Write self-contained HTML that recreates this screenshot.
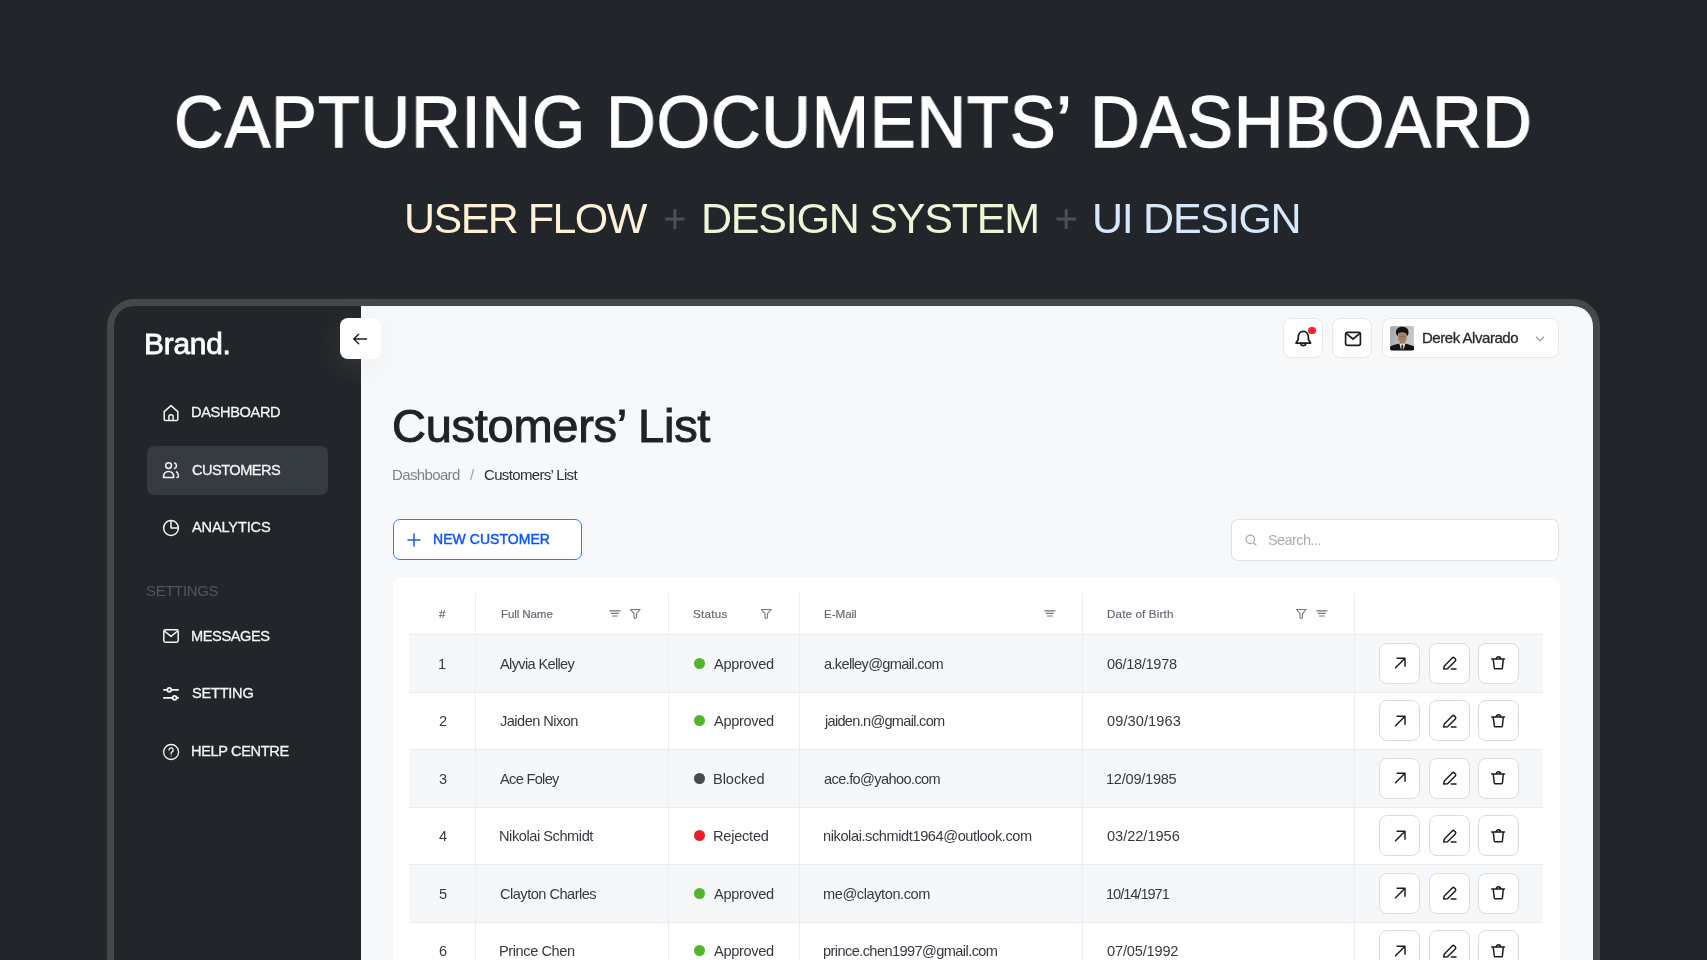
<!DOCTYPE html>
<html><head><meta charset="utf-8"><style>
*{margin:0;padding:0;box-sizing:border-box}
html,body{width:1707px;height:960px;overflow:hidden;background:#222529}
body{position:relative;font-family:"Liberation Sans",sans-serif}
.t{position:absolute;white-space:nowrap;will-change:transform}
.ic{position:absolute;overflow:visible}
.dot{position:absolute;border-radius:50%}
#frame{position:absolute;left:106.6px;top:298.5px;width:1493.4px;height:720px;border-radius:27px;background:#44484b}
#inner{position:absolute;left:114px;top:306px;width:1479px;height:700px;border-radius:20px;background:#222529;overflow:hidden}
#main{position:absolute;left:360.6px;top:306px;width:1232.4px;height:700px;background:#f7f8fa;border-top-right-radius:20px}
.sbtn{position:absolute;background:#fff;border:1px solid #e6e8eb;border-radius:8px}
#active{position:absolute;left:147px;top:445.7px;width:180.5px;height:49.2px;border-radius:7px;background:#363a41}
#collapse{position:absolute;left:340px;top:318px;width:41px;height:41px;border-radius:8px;background:#fff;box-shadow:0 8px 28px rgba(185,190,198,0.13)}
#newbtn{position:absolute;left:393px;top:519.2px;width:189px;height:41.2px;border:1.4px solid #3a78f7;border-radius:7px;background:#fff}
#search{position:absolute;left:1231.4px;top:519.3px;width:328px;height:41.3px;border:1.2px solid #dde1e6;border-radius:7px;background:#fff}
#card{position:absolute;left:393px;top:577px;width:1166.8px;height:420px;border-radius:8px;background:#fff}
.row{position:absolute;left:409px;width:1134px;border-top:1px solid #e9ecef}
.vline{position:absolute;top:593px;width:1px;height:380px;background:#eceef1}
.abtn{position:absolute;width:41px;height:41px;border:1.2px solid #d9dde2;border-radius:8px;background:#fff}
</style></head><body>
<svg class="ic" style="left:0;top:0;width:1707px;height:300px" viewBox="0 0 1707 300" stroke="#4b5158" stroke-width="3" fill="none">
<path d="M665.3 218.9 H684.5 M674.9 209.2 V228.9 M1056.5 218.9 H1075.9 M1066.2 209.2 V228.9"/>
</svg>
<div id="frame"></div>
<div id="inner"></div>
<div id="main"></div>
<div id="active"></div>
<div id="collapse"></div>
<div class="sbtn" style="left:1283.1px;top:318.3px;width:40.1px;height:40.1px"></div>
<div class="sbtn" style="left:1332.3px;top:318.3px;width:40.1px;height:40.1px"></div>
<div class="sbtn" style="left:1382.3px;top:318.3px;width:176.9px;height:40.1px"></div>
<svg style="position:absolute;left:1389.5px;top:326.3px;width:24.5px;height:24.6px" viewBox="0 0 25 25">
<defs><linearGradient id="ag" x1="0" y1="0" x2="1" y2="0.3"><stop offset="0" stop-color="#a4a9ab"/><stop offset="1" stop-color="#c6cacb"/></linearGradient>
<clipPath id="ac"><rect width="25" height="25" rx="2.6"/></clipPath></defs>
<g clip-path="url(#ac)">
<rect width="25" height="25" fill="url(#ag)"/>
<path d="M10.2 15 L10.2 19.5 L14.8 19.5 L14.8 15 Z" fill="#8a6550"/>
<ellipse cx="12.6" cy="11.6" rx="4.3" ry="5.9" fill="#a77e62"/>
<path d="M8.8 10.2 H16.4 V11.4 H8.8 Z" fill="#6a5042" opacity="0.35"/>
<path d="M6.2 7.6 C5.6 3 8.6 0.7 12.5 0.8 C16.6 0.9 19.4 3 18.8 7.6 C18.4 9 17.8 9.8 17.2 10.4 C17.2 8.4 16.4 6.9 14.2 6.6 C12.4 6.3 10.4 6.4 9 7.1 C8.3 7.6 8 8.8 8.1 10.4 C7.2 9.6 6.5 8.7 6.2 7.6 Z" fill="#141212"/>
<path d="M0 25.5 V21.2 C1.8 19.8 5.6 18.8 9.4 17.8 L12.6 25.5 Z" fill="#111213"/>
<path d="M25 25.5 V21.2 C23.2 19.8 19.4 18.8 15.8 17.8 L12.6 25.5 Z" fill="#111213"/>
<path d="M9.6 17.8 L15.6 17.8 L13.6 25.5 H11.6 Z" fill="#e4e6e6"/>
<path d="M11.9 19.2 H13.3 L13.9 25.5 H11.3 Z" fill="#1d1f21"/>
</g></svg>
<div id="newbtn"></div>
<div id="search"></div>
<div id="card"></div>
<div class="row" style="top:634.3px;height:57.5px;background:#f6f7f9"></div><div class="dot" style="left:693.7px;top:657.8px;width:11.2px;height:11.2px;background:#52b62c"></div><div class="abtn" style="left:1379.2px;top:642.5999999999999px"></div><div class="abtn" style="left:1428.5px;top:642.5999999999999px"></div><div class="abtn" style="left:1478.2px;top:642.5999999999999px"></div><svg class="ic" style="left:1392.5px;top:655.3px;width:16px;height:16px" viewBox="0 0 16 16" fill="none" stroke="#1a1d21" stroke-width="1.45" stroke-linecap="round" stroke-linejoin="round" ><path d="M2.5 12.7 L12 3.2 M4.1 3.2 H12 V11.2"/></svg><svg class="ic" style="left:1441.5px;top:655.3px;width:16px;height:16px" viewBox="0 0 16 16" fill="none" stroke="#1a1d21" stroke-width="1.45" stroke-linecap="round" stroke-linejoin="round" ><path d="M1.7 14 L2.3 10.9 L10.3 2.9 a1.5 1.5 0 0 1 2.1 0 L13.3 3.8 a1.5 1.5 0 0 1 0 2.1 L5.3 13.9 Z"/><path d="M9.3 14 H14"/></svg><svg class="ic" style="left:1490.3px;top:655.3px;width:16px;height:16px" viewBox="0 0 16 16" fill="none" stroke="#1a1d21" stroke-width="1.5" stroke-linecap="round" stroke-linejoin="round" ><path d="M1.7 4.1 H14.5 M6.1 4.1 a2.3 2.3 0 0 1 4.6 0 M3.2 4.1 L4.3 12.9 a1.1 1.1 0 0 0 1.1 0.9 H11.3 a1.1 1.1 0 0 0 1.1 -0.9 L13.3 4.1"/></svg><div class="row" style="top:691.8px;height:57.5px;background:#ffffff"></div><div class="dot" style="left:693.7px;top:715.3px;width:11.2px;height:11.2px;background:#52b62c"></div><div class="abtn" style="left:1379.2px;top:700.0999999999999px"></div><div class="abtn" style="left:1428.5px;top:700.0999999999999px"></div><div class="abtn" style="left:1478.2px;top:700.0999999999999px"></div><svg class="ic" style="left:1392.5px;top:712.8px;width:16px;height:16px" viewBox="0 0 16 16" fill="none" stroke="#1a1d21" stroke-width="1.45" stroke-linecap="round" stroke-linejoin="round" ><path d="M2.5 12.7 L12 3.2 M4.1 3.2 H12 V11.2"/></svg><svg class="ic" style="left:1441.5px;top:712.8px;width:16px;height:16px" viewBox="0 0 16 16" fill="none" stroke="#1a1d21" stroke-width="1.45" stroke-linecap="round" stroke-linejoin="round" ><path d="M1.7 14 L2.3 10.9 L10.3 2.9 a1.5 1.5 0 0 1 2.1 0 L13.3 3.8 a1.5 1.5 0 0 1 0 2.1 L5.3 13.9 Z"/><path d="M9.3 14 H14"/></svg><svg class="ic" style="left:1490.3px;top:712.8px;width:16px;height:16px" viewBox="0 0 16 16" fill="none" stroke="#1a1d21" stroke-width="1.5" stroke-linecap="round" stroke-linejoin="round" ><path d="M1.7 4.1 H14.5 M6.1 4.1 a2.3 2.3 0 0 1 4.6 0 M3.2 4.1 L4.3 12.9 a1.1 1.1 0 0 0 1.1 0.9 H11.3 a1.1 1.1 0 0 0 1.1 -0.9 L13.3 4.1"/></svg><div class="row" style="top:749.3px;height:57.5px;background:#f6f7f9"></div><div class="dot" style="left:693.7px;top:772.8px;width:11.2px;height:11.2px;background:#464b52"></div><div class="abtn" style="left:1379.2px;top:757.5999999999999px"></div><div class="abtn" style="left:1428.5px;top:757.5999999999999px"></div><div class="abtn" style="left:1478.2px;top:757.5999999999999px"></div><svg class="ic" style="left:1392.5px;top:770.3px;width:16px;height:16px" viewBox="0 0 16 16" fill="none" stroke="#1a1d21" stroke-width="1.45" stroke-linecap="round" stroke-linejoin="round" ><path d="M2.5 12.7 L12 3.2 M4.1 3.2 H12 V11.2"/></svg><svg class="ic" style="left:1441.5px;top:770.3px;width:16px;height:16px" viewBox="0 0 16 16" fill="none" stroke="#1a1d21" stroke-width="1.45" stroke-linecap="round" stroke-linejoin="round" ><path d="M1.7 14 L2.3 10.9 L10.3 2.9 a1.5 1.5 0 0 1 2.1 0 L13.3 3.8 a1.5 1.5 0 0 1 0 2.1 L5.3 13.9 Z"/><path d="M9.3 14 H14"/></svg><svg class="ic" style="left:1490.3px;top:770.3px;width:16px;height:16px" viewBox="0 0 16 16" fill="none" stroke="#1a1d21" stroke-width="1.5" stroke-linecap="round" stroke-linejoin="round" ><path d="M1.7 4.1 H14.5 M6.1 4.1 a2.3 2.3 0 0 1 4.6 0 M3.2 4.1 L4.3 12.9 a1.1 1.1 0 0 0 1.1 0.9 H11.3 a1.1 1.1 0 0 0 1.1 -0.9 L13.3 4.1"/></svg><div class="row" style="top:806.8px;height:57.5px;background:#ffffff"></div><div class="dot" style="left:693.7px;top:830.3px;width:11.2px;height:11.2px;background:#f01d25"></div><div class="abtn" style="left:1379.2px;top:815.0999999999999px"></div><div class="abtn" style="left:1428.5px;top:815.0999999999999px"></div><div class="abtn" style="left:1478.2px;top:815.0999999999999px"></div><svg class="ic" style="left:1392.5px;top:827.8px;width:16px;height:16px" viewBox="0 0 16 16" fill="none" stroke="#1a1d21" stroke-width="1.45" stroke-linecap="round" stroke-linejoin="round" ><path d="M2.5 12.7 L12 3.2 M4.1 3.2 H12 V11.2"/></svg><svg class="ic" style="left:1441.5px;top:827.8px;width:16px;height:16px" viewBox="0 0 16 16" fill="none" stroke="#1a1d21" stroke-width="1.45" stroke-linecap="round" stroke-linejoin="round" ><path d="M1.7 14 L2.3 10.9 L10.3 2.9 a1.5 1.5 0 0 1 2.1 0 L13.3 3.8 a1.5 1.5 0 0 1 0 2.1 L5.3 13.9 Z"/><path d="M9.3 14 H14"/></svg><svg class="ic" style="left:1490.3px;top:827.8px;width:16px;height:16px" viewBox="0 0 16 16" fill="none" stroke="#1a1d21" stroke-width="1.5" stroke-linecap="round" stroke-linejoin="round" ><path d="M1.7 4.1 H14.5 M6.1 4.1 a2.3 2.3 0 0 1 4.6 0 M3.2 4.1 L4.3 12.9 a1.1 1.1 0 0 0 1.1 0.9 H11.3 a1.1 1.1 0 0 0 1.1 -0.9 L13.3 4.1"/></svg><div class="row" style="top:864.3px;height:57.5px;background:#f6f7f9"></div><div class="dot" style="left:693.7px;top:887.8px;width:11.2px;height:11.2px;background:#52b62c"></div><div class="abtn" style="left:1379.2px;top:872.5999999999999px"></div><div class="abtn" style="left:1428.5px;top:872.5999999999999px"></div><div class="abtn" style="left:1478.2px;top:872.5999999999999px"></div><svg class="ic" style="left:1392.5px;top:885.3px;width:16px;height:16px" viewBox="0 0 16 16" fill="none" stroke="#1a1d21" stroke-width="1.45" stroke-linecap="round" stroke-linejoin="round" ><path d="M2.5 12.7 L12 3.2 M4.1 3.2 H12 V11.2"/></svg><svg class="ic" style="left:1441.5px;top:885.3px;width:16px;height:16px" viewBox="0 0 16 16" fill="none" stroke="#1a1d21" stroke-width="1.45" stroke-linecap="round" stroke-linejoin="round" ><path d="M1.7 14 L2.3 10.9 L10.3 2.9 a1.5 1.5 0 0 1 2.1 0 L13.3 3.8 a1.5 1.5 0 0 1 0 2.1 L5.3 13.9 Z"/><path d="M9.3 14 H14"/></svg><svg class="ic" style="left:1490.3px;top:885.3px;width:16px;height:16px" viewBox="0 0 16 16" fill="none" stroke="#1a1d21" stroke-width="1.5" stroke-linecap="round" stroke-linejoin="round" ><path d="M1.7 4.1 H14.5 M6.1 4.1 a2.3 2.3 0 0 1 4.6 0 M3.2 4.1 L4.3 12.9 a1.1 1.1 0 0 0 1.1 0.9 H11.3 a1.1 1.1 0 0 0 1.1 -0.9 L13.3 4.1"/></svg><div class="row" style="top:921.8px;height:57.5px;background:#ffffff"></div><div class="dot" style="left:693.7px;top:945.3px;width:11.2px;height:11.2px;background:#52b62c"></div><div class="abtn" style="left:1379.2px;top:930.0999999999999px"></div><div class="abtn" style="left:1428.5px;top:930.0999999999999px"></div><div class="abtn" style="left:1478.2px;top:930.0999999999999px"></div><svg class="ic" style="left:1392.5px;top:942.8px;width:16px;height:16px" viewBox="0 0 16 16" fill="none" stroke="#1a1d21" stroke-width="1.45" stroke-linecap="round" stroke-linejoin="round" ><path d="M2.5 12.7 L12 3.2 M4.1 3.2 H12 V11.2"/></svg><svg class="ic" style="left:1441.5px;top:942.8px;width:16px;height:16px" viewBox="0 0 16 16" fill="none" stroke="#1a1d21" stroke-width="1.45" stroke-linecap="round" stroke-linejoin="round" ><path d="M1.7 14 L2.3 10.9 L10.3 2.9 a1.5 1.5 0 0 1 2.1 0 L13.3 3.8 a1.5 1.5 0 0 1 0 2.1 L5.3 13.9 Z"/><path d="M9.3 14 H14"/></svg><svg class="ic" style="left:1490.3px;top:942.8px;width:16px;height:16px" viewBox="0 0 16 16" fill="none" stroke="#1a1d21" stroke-width="1.5" stroke-linecap="round" stroke-linejoin="round" ><path d="M1.7 4.1 H14.5 M6.1 4.1 a2.3 2.3 0 0 1 4.6 0 M3.2 4.1 L4.3 12.9 a1.1 1.1 0 0 0 1.1 0.9 H11.3 a1.1 1.1 0 0 0 1.1 -0.9 L13.3 4.1"/></svg>
<div class="vline" style="left:475px"></div><div class="vline" style="left:668px"></div><div class="vline" style="left:799px"></div><div class="vline" style="left:1082px"></div><div class="vline" style="left:1354px"></div>
<div class="dot" style="left:1307.8px;top:326.5px;width:7.8px;height:7.8px;background:#ff1e26"></div>
<svg class="ic" style="left:161px;top:403px;width:20px;height:20px" viewBox="0 0 20 20" fill="none" stroke="#f3f4f5" stroke-width="1.5" stroke-linecap="round" stroke-linejoin="round" ><path d="M3.2 8.6 L10 2.6 L16.8 8.6 V16.2 a1.3 1.3 0 0 1 -1.3 1.3 H4.5 a1.3 1.3 0 0 1 -1.3 -1.3 Z"/><path d="M7.9 17.5 V13.9 a2.1 2.1 0 0 1 4.2 0 V17.5"/></svg><svg class="ic" style="left:161px;top:460px;width:20px;height:20px" viewBox="0 0 20 20" fill="none" stroke="#f3f4f5" stroke-width="1.5" stroke-linecap="round" stroke-linejoin="round" ><circle cx="7.6" cy="5.6" r="2.9"/><path d="M2.5 17.6 C2.5 13.6 4.6 11.6 7.6 11.6 C10.6 11.6 12.7 13.6 12.7 17.6 Z"/><path d="M13.6 3 a2.9 2.9 0 0 1 0 5.4"/><path d="M15.6 11.9 C16.8 12.8 17.4 14.4 17.4 16.2 C17.4 17.2 16.8 17.6 16 17.6"/></svg><svg class="ic" style="left:161px;top:517.6px;width:20px;height:20px" viewBox="0 0 20 20" fill="none" stroke="#f3f4f5" stroke-width="1.5" stroke-linecap="round" stroke-linejoin="round" ><circle cx="10" cy="10" r="7.4"/><path d="M10 2.6 V10 H17.4"/></svg><svg class="ic" style="left:161px;top:626.4px;width:20px;height:20px" viewBox="0 0 20 20" fill="none" stroke="#f3f4f5" stroke-width="1.5" stroke-linecap="round" stroke-linejoin="round" ><rect x="2.8" y="3.8" width="14.4" height="12.4" rx="1.6"/><path d="M3.4 5 L10 10.4 L16.6 5"/></svg><svg class="ic" style="left:161px;top:684px;width:20px;height:20px" viewBox="0 0 20 20" fill="none" stroke="#f3f4f5" stroke-width="1.7" stroke-linecap="round" stroke-linejoin="round" ><path d="M2.8 5.8 H6.3 M10.3 5.8 H17.2 M2.8 13.8 H11.6 M15.6 13.8 H17.2"/><circle cx="8.3" cy="5.8" r="2"/><circle cx="13.6" cy="13.8" r="2"/></svg><svg class="ic" style="left:161px;top:741.6px;width:20px;height:20px" viewBox="0 0 20 20" fill="none" stroke="#f3f4f5" stroke-width="1.3" stroke-linecap="round" stroke-linejoin="round" ><circle cx="10.1" cy="10" r="7.5"/><path d="M8 8 a2.1 2.1 0 1 1 3 1.9 c-0.6 0.3 -0.9 0.8 -0.9 1.5 v0.5"/><circle cx="10.1" cy="14.1" r="0.5" fill="#f3f4f5" stroke="none"/></svg><svg class="ic" style="left:350px;top:328.5px;width:20px;height:20px" viewBox="0 0 20 20" fill="none" stroke="#1a1d21" stroke-width="1.35" stroke-linecap="round" stroke-linejoin="round" ><path d="M16.6 10 H3.7 M8.7 5.2 L3.7 10 L8.7 14.8"/></svg><svg class="ic" style="left:1293px;top:329px;width:20px;height:20px" viewBox="0 0 20 20" fill="none" stroke="#1a1d21" stroke-width="1.75" stroke-linecap="round" stroke-linejoin="round" ><path d="M5.2 8.4 C5.2 4.8 7.4 2.3 10.3 2.3 C13.2 2.3 15.4 4.8 15.4 8.4 V10.6 L17.6 14 H3 L5.2 10.6 Z"/><path d="M7.9 14.3 a2.4 2.4 0 0 0 4.8 0"/></svg><svg class="ic" style="left:1342.7px;top:328.6px;width:20px;height:20px" viewBox="0 0 20 20" fill="none" stroke="#1a1d21" stroke-width="1.7" stroke-linecap="round" stroke-linejoin="round" ><rect x="2.6" y="3.4" width="14.8" height="13" rx="1.8"/><path d="M3.4 4.6 L10 10 L16.6 4.6"/></svg><svg class="ic" style="left:1533.5px;top:333px;width:12px;height:12px" viewBox="0 0 12 12" fill="none" stroke="#9ba3ab" stroke-width="1.3" stroke-linecap="round" stroke-linejoin="round" ><path d="M2.3 4 L6 7.8 L9.7 4"/></svg><svg class="ic" style="left:406px;top:532px;width:16px;height:16px" viewBox="0 0 16 16" fill="none" stroke="#1559f2" stroke-width="1.5" stroke-linecap="round" stroke-linejoin="round" ><path d="M8 2 V14 M2 8 H14"/></svg><svg class="ic" style="left:1244px;top:532.6px;width:14px;height:14px" viewBox="0 0 14 14" fill="none" stroke="#a3aab2" stroke-width="1.2" stroke-linecap="round" stroke-linejoin="round" ><circle cx="6.3" cy="6.4" r="4.2"/><path d="M9.4 9.6 L12 12.2"/></svg><svg class="ic" style="left:608px;top:607.1px;width:14px;height:14px" viewBox="0 0 14 14" fill="none" stroke="#6d757e" stroke-width="1.1" stroke-linecap="round" stroke-linejoin="round" ><path d="M1.7 3.85 H12.1 M3.3 6.4 H10.2 M4.5 9 H9.3"/></svg><svg class="ic" style="left:627.8px;top:606.8px;width:14px;height:14px" viewBox="0 0 14 14" fill="none" stroke="#6d757e" stroke-width="1.1" stroke-linecap="round" stroke-linejoin="round" ><path d="M2.5 2.5 H12.2 L8.4 6.6 V10.3 a1.2 1.2 0 0 1 -2.4 0 V6.6 Z"/></svg><svg class="ic" style="left:759.2px;top:606.8px;width:14px;height:14px" viewBox="0 0 14 14" fill="none" stroke="#6d757e" stroke-width="1.1" stroke-linecap="round" stroke-linejoin="round" ><path d="M2.5 2.5 H12.2 L8.4 6.6 V10.3 a1.2 1.2 0 0 1 -2.4 0 V6.6 Z"/></svg><svg class="ic" style="left:1042.5px;top:607.1px;width:14px;height:14px" viewBox="0 0 14 14" fill="none" stroke="#6d757e" stroke-width="1.1" stroke-linecap="round" stroke-linejoin="round" ><path d="M1.7 3.85 H12.1 M3.3 6.4 H10.2 M4.5 9 H9.3"/></svg><svg class="ic" style="left:1294px;top:606.8px;width:14px;height:14px" viewBox="0 0 14 14" fill="none" stroke="#6d757e" stroke-width="1.1" stroke-linecap="round" stroke-linejoin="round" ><path d="M2.5 2.5 H12.2 L8.4 6.6 V10.3 a1.2 1.2 0 0 1 -2.4 0 V6.6 Z"/></svg><svg class="ic" style="left:1315px;top:607.1px;width:14px;height:14px" viewBox="0 0 14 14" fill="none" stroke="#6d757e" stroke-width="1.1" stroke-linecap="round" stroke-linejoin="round" ><path d="M1.7 3.85 H12.1 M3.3 6.4 H10.2 M4.5 9 H9.3"/></svg>
<div class="t" style="left:174.20px;top:84.50px;font-size:73px;line-height:73px;color:#ffffff;font-weight:400;letter-spacing:0.957px;transform-origin:0 0;transform:scaleX(0.94);-webkit-text-stroke:1.3px #ffffff">CAPTURING DOCUMENTS’ DASHBOARD</div>
<div class="t" style="left:403.60px;top:197.10px;font-size:43px;line-height:43px;color:#fff1d8;font-weight:400;letter-spacing:-1.55px">USER FLOW</div>
<div class="t" style="left:700.70px;top:197.10px;font-size:43px;line-height:43px;color:#edf7d8;font-weight:400;letter-spacing:-1.208px">DESIGN SYSTEM</div>
<div class="t" style="left:1091.60px;top:197.10px;font-size:43px;line-height:43px;color:#d6e8fb;font-weight:400;letter-spacing:-1.275px">UI DESIGN</div>
<div class="t" style="left:144.30px;top:328.60px;font-size:29.8px;line-height:29.8px;color:#ffffff;font-weight:400;letter-spacing:-0.18px;-webkit-text-stroke:0.8px #ffffff">Brand.</div>
<div class="t" style="left:191.40px;top:404.80px;font-size:14.6px;line-height:14.6px;color:#f3f4f5;font-weight:400;letter-spacing:-0.35px;-webkit-text-stroke:0.3px #f3f4f5">DASHBOARD</div>
<div class="t" style="left:192.40px;top:462.50px;font-size:14.6px;line-height:14.6px;color:#f3f4f5;font-weight:400;letter-spacing:-0.525px;-webkit-text-stroke:0.3px #f3f4f5">CUSTOMERS</div>
<div class="t" style="left:192.40px;top:520.10px;font-size:14.6px;line-height:14.6px;color:#f3f4f5;font-weight:400;letter-spacing:-0.175px;-webkit-text-stroke:0.3px #f3f4f5">ANALYTICS</div>
<div class="t" style="left:191.40px;top:629.00px;font-size:14.6px;line-height:14.6px;color:#f3f4f5;font-weight:400;letter-spacing:-0.414px;-webkit-text-stroke:0.3px #f3f4f5">MESSAGES</div>
<div class="t" style="left:192.40px;top:686.10px;font-size:14.6px;line-height:14.6px;color:#f3f4f5;font-weight:400;letter-spacing:-0.25px;-webkit-text-stroke:0.3px #f3f4f5">SETTING</div>
<div class="t" style="left:191.40px;top:743.70px;font-size:14.6px;line-height:14.6px;color:#f3f4f5;font-weight:400;letter-spacing:-0.37px;-webkit-text-stroke:0.3px #f3f4f5">HELP CENTRE</div>
<div class="t" style="left:145.60px;top:582.60px;font-size:15px;line-height:15px;color:#50565d;font-weight:400;letter-spacing:-0.357px">SETTINGS</div>
<div class="t" style="left:1422.00px;top:330.00px;font-size:15px;line-height:15px;color:#25292e;font-weight:400;letter-spacing:-0.462px;-webkit-text-stroke:0.3px #25292e">Derek Alvarado</div>
<div class="t" style="left:392.00px;top:401.80px;font-size:47px;line-height:47px;color:#1f2328;font-weight:400;letter-spacing:-0.264px;-webkit-text-stroke:1.0px #1f2328">Customers’ List</div>
<div class="t" style="left:392.40px;top:466.70px;font-size:15px;line-height:15px;color:#7b838b;font-weight:400;letter-spacing:-0.637px">Dashboard</div>
<div class="t" style="left:469.70px;top:466.70px;font-size:15px;line-height:15px;color:#9aa1a8;font-weight:400;letter-spacing:0px">/</div>
<div class="t" style="left:484.00px;top:466.70px;font-size:15px;line-height:15px;color:#2c3136;font-weight:400;letter-spacing:-0.657px">Customers’ List</div>
<div class="t" style="left:432.70px;top:532.00px;font-size:14px;line-height:14px;color:#0b57f5;font-weight:400;letter-spacing:0.045px;-webkit-text-stroke:0.45px #0b57f5">NEW CUSTOMER</div>
<div class="t" style="left:1267.80px;top:533.10px;font-size:14.5px;line-height:14.5px;color:#a9b0b8;font-weight:400;letter-spacing:-0.6px">Search...</div>
<div class="t" style="left:439.20px;top:608.00px;font-size:11.6px;line-height:11.6px;color:#646c75;font-weight:400;letter-spacing:0px;-webkit-text-stroke:0.2px #646c75">#</div>
<div class="t" style="left:500.60px;top:608.00px;font-size:11.6px;line-height:11.6px;color:#646c75;font-weight:400;letter-spacing:-0.125px;-webkit-text-stroke:0.2px #646c75">Full Name</div>
<div class="t" style="left:693.10px;top:608.00px;font-size:11.6px;line-height:11.6px;color:#646c75;font-weight:400;letter-spacing:0.3px;-webkit-text-stroke:0.2px #646c75">Status</div>
<div class="t" style="left:824.20px;top:608.00px;font-size:11.6px;line-height:11.6px;color:#646c75;font-weight:400;letter-spacing:-0.04px;-webkit-text-stroke:0.2px #646c75">E-Mail</div>
<div class="t" style="left:1107.40px;top:608.00px;font-size:11.6px;line-height:11.6px;color:#646c75;font-weight:400;letter-spacing:0.158px;-webkit-text-stroke:0.2px #646c75">Date of Birth</div>
<div class="t" style="left:438.00px;top:656.60px;font-size:14.6px;line-height:14.6px;color:#353a40;font-weight:400;letter-spacing:0px">1</div>
<div class="t" style="left:500.20px;top:656.60px;font-size:14.6px;line-height:14.6px;color:#353a40;font-weight:400;letter-spacing:-0.658px">Alyvia Kelley</div>
<div class="t" style="left:713.70px;top:656.60px;font-size:14.6px;line-height:14.6px;color:#353a40;font-weight:400;letter-spacing:-0.343px">Approved</div>
<div class="t" style="left:823.50px;top:656.60px;font-size:14.6px;line-height:14.6px;color:#353a40;font-weight:400;letter-spacing:-0.659px">a.kelley@gmail.com</div>
<div class="t" style="left:1107.30px;top:656.60px;font-size:14.6px;line-height:14.6px;color:#353a40;font-weight:400;letter-spacing:-0.333px">06/18/1978</div>
<div class="t" style="left:438.50px;top:714.10px;font-size:14.6px;line-height:14.6px;color:#353a40;font-weight:400;letter-spacing:0px">2</div>
<div class="t" style="left:500.20px;top:714.10px;font-size:14.6px;line-height:14.6px;color:#353a40;font-weight:400;letter-spacing:-0.536px">Jaiden Nixon</div>
<div class="t" style="left:713.70px;top:714.10px;font-size:14.6px;line-height:14.6px;color:#353a40;font-weight:400;letter-spacing:-0.343px">Approved</div>
<div class="t" style="left:824.50px;top:714.10px;font-size:14.6px;line-height:14.6px;color:#353a40;font-weight:400;letter-spacing:-0.718px">jaiden.n@gmail.com</div>
<div class="t" style="left:1107.30px;top:714.10px;font-size:14.6px;line-height:14.6px;color:#353a40;font-weight:400;letter-spacing:0.078px">09/30/1963</div>
<div class="t" style="left:438.50px;top:771.60px;font-size:14.6px;line-height:14.6px;color:#353a40;font-weight:400;letter-spacing:0px">3</div>
<div class="t" style="left:500.20px;top:771.60px;font-size:14.6px;line-height:14.6px;color:#353a40;font-weight:400;letter-spacing:-0.687px">Ace Foley</div>
<div class="t" style="left:712.70px;top:771.60px;font-size:14.6px;line-height:14.6px;color:#353a40;font-weight:400;letter-spacing:-0.067px">Blocked</div>
<div class="t" style="left:823.50px;top:771.60px;font-size:14.6px;line-height:14.6px;color:#353a40;font-weight:400;letter-spacing:-0.613px">ace.fo@yahoo.com</div>
<div class="t" style="left:1106.30px;top:771.60px;font-size:14.6px;line-height:14.6px;color:#353a40;font-weight:400;letter-spacing:-0.256px">12/09/1985</div>
<div class="t" style="left:438.50px;top:829.10px;font-size:14.6px;line-height:14.6px;color:#353a40;font-weight:400;letter-spacing:0px">4</div>
<div class="t" style="left:499.20px;top:829.10px;font-size:14.6px;line-height:14.6px;color:#353a40;font-weight:400;letter-spacing:-0.443px">Nikolai Schmidt</div>
<div class="t" style="left:712.70px;top:829.10px;font-size:14.6px;line-height:14.6px;color:#353a40;font-weight:400;letter-spacing:-0.243px">Rejected</div>
<div class="t" style="left:822.50px;top:829.10px;font-size:14.6px;line-height:14.6px;color:#353a40;font-weight:400;letter-spacing:-0.417px">nikolai.schmidt1964@outlook.com</div>
<div class="t" style="left:1107.30px;top:829.10px;font-size:14.6px;line-height:14.6px;color:#353a40;font-weight:400;letter-spacing:-0.033px">03/22/1956</div>
<div class="t" style="left:438.50px;top:886.60px;font-size:14.6px;line-height:14.6px;color:#353a40;font-weight:400;letter-spacing:0px">5</div>
<div class="t" style="left:500.20px;top:886.60px;font-size:14.6px;line-height:14.6px;color:#353a40;font-weight:400;letter-spacing:-0.514px">Clayton Charles</div>
<div class="t" style="left:713.70px;top:886.60px;font-size:14.6px;line-height:14.6px;color:#353a40;font-weight:400;letter-spacing:-0.343px">Approved</div>
<div class="t" style="left:822.50px;top:886.60px;font-size:14.6px;line-height:14.6px;color:#353a40;font-weight:400;letter-spacing:-0.423px">me@clayton.com</div>
<div class="t" style="left:1106.30px;top:886.60px;font-size:14.6px;line-height:14.6px;color:#353a40;font-weight:400;letter-spacing:-1.033px">10/14/1971</div>
<div class="t" style="left:438.50px;top:944.10px;font-size:14.6px;line-height:14.6px;color:#353a40;font-weight:400;letter-spacing:0px">6</div>
<div class="t" style="left:499.20px;top:944.10px;font-size:14.6px;line-height:14.6px;color:#353a40;font-weight:400;letter-spacing:-0.42px">Prince Chen</div>
<div class="t" style="left:713.70px;top:944.10px;font-size:14.6px;line-height:14.6px;color:#353a40;font-weight:400;letter-spacing:-0.343px">Approved</div>
<div class="t" style="left:822.50px;top:944.10px;font-size:14.6px;line-height:14.6px;color:#353a40;font-weight:400;letter-spacing:-0.592px">prince.chen1997@gmail.com</div>
<div class="t" style="left:1107.30px;top:944.10px;font-size:14.6px;line-height:14.6px;color:#353a40;font-weight:400;letter-spacing:-0.178px">07/05/1992</div>
</body></html>
